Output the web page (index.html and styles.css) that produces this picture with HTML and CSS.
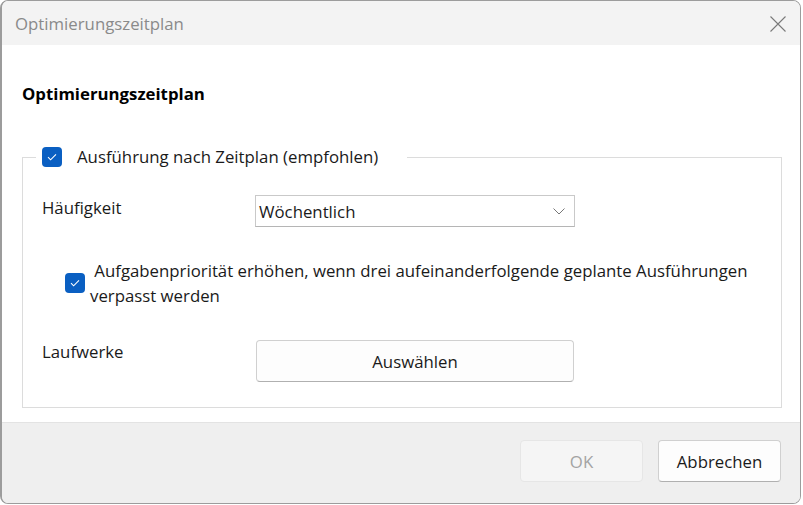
FILE: index.html
```html
<!DOCTYPE html>
<html lang="de">
<head>
<meta charset="utf-8">
<title>Optimierungszeitplan</title>
<link rel="stylesheet" href="styles.css">
</head>
<body>
<div class="window">
  <div class="titlebar">
    <span class="title">Optimierungszeitplan</span>
    <span class="close" aria-label="Schließen">
      <svg width="16" height="16" viewBox="0 0 16 16"><path d="M0.5 0.5 L15.5 15.5 M15.5 0.5 L0.5 15.5" stroke="#7a7a7a" stroke-width="1.1" fill="none"/></svg>
    </span>
  </div>
  <div class="content">
    <h1 class="heading">Optimierungszeitplan</h1>
    <fieldset class="group">
      <legend class="legend">
        <span class="checkbox"><svg width="20" height="20" viewBox="0 0 20 20"><path d="M6 10.2 L8.6 12.8 L14 7.4" stroke="#fff" stroke-width="1.1" fill="none"/></svg></span>
        <span class="legend-text">Ausführung nach Zeitplan (empfohlen)</span>
      </legend>
      <div class="row row-freq">
        <span class="label">Häufigkeit</span>
        <div class="select">
          <span>Wöchentlich</span>
          <svg class="chevron" width="12" height="7" viewBox="0 0 12 7"><path d="M0.5 0.5 L6 6 L11.5 0.5" stroke="#777" stroke-width="1" fill="none"/></svg>
        </div>
      </div>
      <div class="row-check">
        <span class="checkbox"><svg width="20" height="20" viewBox="0 0 20 20"><path d="M6 10.2 L8.6 12.8 L14 7.4" stroke="#fff" stroke-width="1.1" fill="none"/></svg></span>
        <span class="check-text">&nbsp;Aufgabenpriorität erhöhen, wenn drei aufeinanderfolgende geplante Ausführungen verpasst werden</span>
      </div>
      <div class="row row-drives">
        <span class="label">Laufwerke</span>
        <button class="btn btn-wide" type="button">Auswählen</button>
      </div>
    </fieldset>
  </div>
  <div class="footer">
    <button class="btn btn-foot btn-disabled" type="button" disabled>OK</button>
    <button class="btn btn-foot" type="button">Abbrechen</button>
  </div>
</div>
</body>
</html>
```
FILE: styles.css
```css
html, body {
  margin: 0;
  padding: 0;
  background: #ffffff;
}
body {
  font-family: "Open Sans", "Noto Sans", sans-serif;
  font-size: 16.8px;
  color: #1a1a1a;
}
.window {
  width: 801px;
  height: 504px;
  box-sizing: border-box;
  border: 1px solid #9c9c9c;
  border-left-width: 2px;
  border-radius: 8px;
  overflow: hidden;
  display: flex;
  flex-direction: column;
  background: #ffffff;
}
.titlebar {
  height: 44px;
  flex: none;
  background: #f3f3f3;
  display: flex;
  align-items: center;
  justify-content: space-between;
  padding: 0 14px 0 13px;
}
.title {
  color: #8a8a8a;
  font-size: 16.8px;
}
.close {
  display: flex;
  margin-top: 1px;
}
.content {
  flex: 1;
  padding: 38px 18px 0 20px;
}
.heading {
  margin: 0 0 42px 0;
  font-size: 16.8px;
  font-weight: 700;
  line-height: 22px;
  color: #000;
}
.group {
  margin: 0;
  padding: 0 0 25px 19px;
  border: 1px solid #dcdcdc;
  min-width: 0;
}
.legend {
  margin-left: -6px;
  padding: 0 29px 0 6px;
  display: flex;
  align-items: center;
  gap: 15px;
  height: 20px;
}
.checkbox {
  width: 20px;
  height: 20px;
  background: #0a5fc2;
  border-radius: 4px;
  display: inline-flex;
  flex: none;
}
.legend-text {
  line-height: 20px;
}
.row {
  display: flex;
  align-items: flex-start;
}
.label {
  width: 213px;
  flex: none;
  line-height: 22px;
}
.row-freq {
  margin-top: 28px;
}
.row-freq .label {
  padding-top: 2px;
}
.select {
  width: 320px;
  height: 32px;
  box-sizing: border-box;
  border: 1px solid #c9c9c9;
  border-bottom-color: #b5b5b5;
  background: #fff;
  display: flex;
  align-items: center;
  justify-content: space-between;
  padding: 1px 9px 0 3px;
}
.chevron {
  margin-top: -1px;
}
.row-check {
  display: flex;
  align-items: center;
  margin: 31px 8px 0 23px;
  gap: 5px;
}
.check-text {
  line-height: 25px;
}
.row-drives {
  margin-top: 32px;
}
.row-drives .label {
  padding-top: 1px;
}
.btn {
  font-family: inherit;
  font-size: 16.8px;
  color: #1a1a1a;
  background: #fdfdfd;
  border: 1px solid #d0d0d0;
  border-bottom-color: #b0b0b0;
  border-radius: 4px;
  margin: 0;
  padding: 0;
}
.btn-wide {
  width: 318px;
  height: 42px;
  margin-left: 1px;
}
.footer {
  height: 81px;
  flex: none;
  box-sizing: border-box;
  background: #efefef;
  border-top: 1px solid #e3e3e3;
  display: flex;
  justify-content: flex-end;
  align-items: flex-start;
  gap: 15px;
  padding: 17px 19px 0 0;
}
.btn-foot {
  width: 123px;
  height: 42px;
}
.btn-disabled {
  background: #f5f5f5;
  color: #a3a3a3;
  border-color: #e6e6e6;
}
```
